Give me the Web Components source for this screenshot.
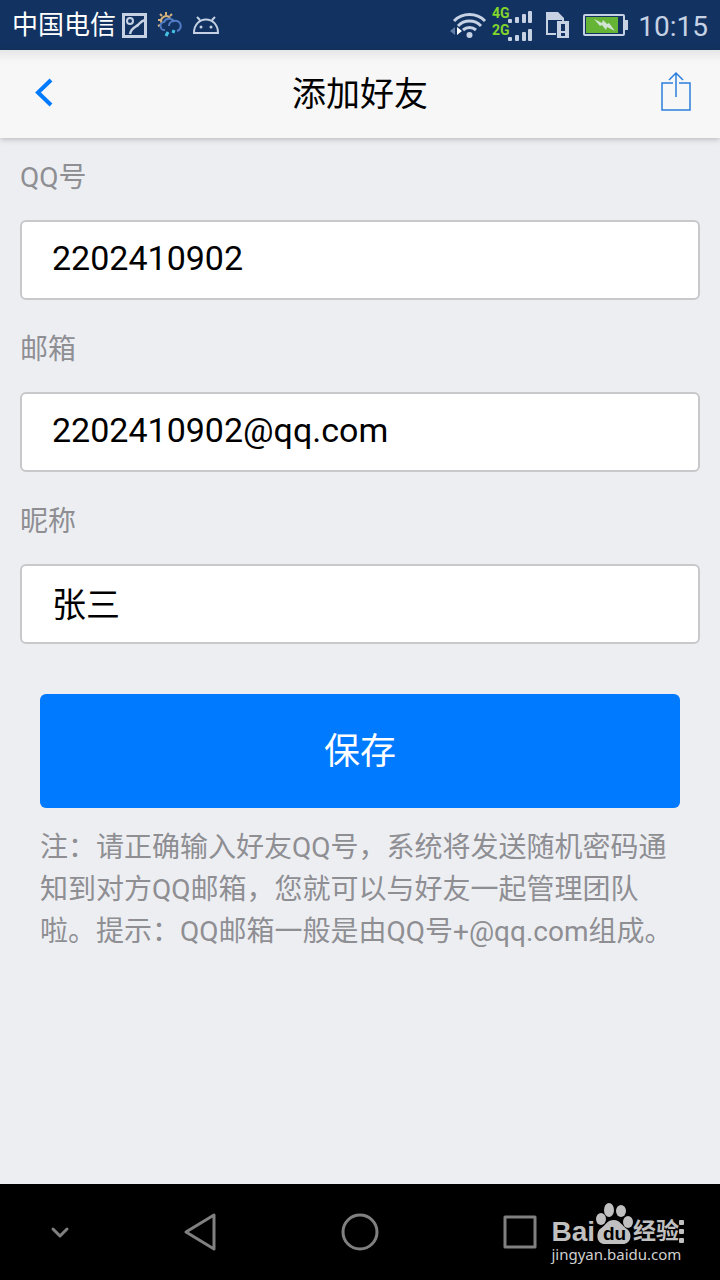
<!DOCTYPE html>
<html lang="zh-CN">
<head>
<meta charset="utf-8">
<meta name="viewport" content="width=device-width, initial-scale=1">
<title>添加好友</title>
<style>
    body {
        margin: 0;
        font-family: Roboto, "Noto Sans CJK SC", sans-serif;
    }
</style>
</head>
<body>
<friend-app></friend-app>

<script>
class StatusBar extends HTMLElement {
    constructor() {
        super();
        this.attachShadow({ mode: 'open' });
    }

    connectedCallback() {
        this.shadowRoot.innerHTML = `
            <style>
                :host {
                    display: flex;
                    align-items: center;
                    justify-content: space-between;
                    height: 50px;
                    padding: 0 12px;
                    background: #123361;
                    color: #c6d1e4;
                }
                .group {
                    display: flex;
                    align-items: center;
                }
                .carrier {
                    color: #fff;
                    font-size: 26px;
                    line-height: 50px;
                    margin-right: 6px;
                }
                .notices { gap: 10px; }
                .system { gap: 10px; }
                .time {
                    font-size: 28px;
                    line-height: 48px;
                    padding-top: 4px;
                }
                svg { display: block; }
                svg text { font: bold 14px Roboto, sans-serif; }
            </style>
            <div class="group">
                <span class="carrier">${this.getAttribute('carrier')}</span>
                <div class="group notices">
                    <svg width="25" height="26" viewBox="0 0 25 26" fill="none" stroke="currentColor">
                        <rect x="1.5" y="2.5" width="22" height="22" stroke-width="3"/>
                        <circle cx="8" cy="9" r="3" stroke-width="2"/>
                        <path d="M8 22C9 16 14 15 16 13C18 11 19 9 23 8" stroke-width="2.5"/>
                    </svg>
                    <svg width="26" height="26" viewBox="0 0 26 26" fill="none">
                        <path d="M4.500 11A5 5 0 0 1 13 6" stroke="#d8b27c" stroke-width="2"/>
                        <path d="M9 0v3M3 2l2 2M1 8h3M15 2l-2 2M3 13l-2 1" stroke="#d8b27c" stroke-width="2"/>
                        <path d="M8 18a4 4 0 0 1-1-8a6 6 0 0 1 10-1a5 5 0 0 1 3 10M12 14a5 5 0 0 1 5-5" stroke="#527cc4" stroke-width="2"/>
                        <path d="M11 20l-2 4M17 18l-1 3" stroke="#45c2e4" stroke-width="3"/>
                    </svg>
                    <svg width="26" height="20" viewBox="0 0 26 20" fill="none" stroke="currentColor" stroke-width="2">
                        <path d="M1 18C1 0 25 0 25 18zM4 2l3 3M22 2l-3 3"/>
                        <circle cx="8" cy="12" r="1.500" fill="currentColor" stroke="none"/>
                        <circle cx="18" cy="12" r="1.500" fill="currentColor" stroke="none"/>
                    </svg>
                </div>
            </div>
            <div class="group system">
                <div class="group">
                    <svg width="38" height="28" viewBox="0 0 38 28" fill="none" stroke="currentColor" stroke-width="3">
                        <path d="M5 10a22 22 0 0 1 31 0M9 15a16 16 0 0 1 23 0M14 19a10 10 0 0 1 13 0"/>
                        <circle cx="20.500" cy="24" r="3" fill="currentColor" stroke="none"/>
                        <path d="M6 16v8l-5-4z" fill="#647ea7" stroke="none"/>
                        <path d="M8 16v8l5-4z" fill="#fff" stroke="none"/>
                    </svg>
                    <svg width="47" height="42" viewBox="0 0 47 42">
                        <g fill="#82d52c">
                            <text x="5" y="14">4G</text>
                            <text x="5" y="31">2G</text>
                        </g>
                        <g fill="currentColor">
                            <rect x="21" y="15" width="4" height="4" rx="1"/>
                            <rect x="28" y="13" width="4" height="6" rx="1"/>
                            <rect x="35" y="10" width="4" height="9" rx="1"/>
                            <rect x="41" y="7" width="4" height="12" rx="1"/>
                            <rect x="21" y="33" width="4" height="4" rx="1"/>
                            <rect x="28" y="31" width="4" height="6" rx="1"/>
                            <rect x="35" y="28" width="4" height="9" rx="1"/>
                            <rect x="41" y="25" width="4" height="12" rx="1"/>
                        </g>
                    </svg>
                </div>
                <svg width="28" height="28" viewBox="0 0 28 28">
                    <path d="M2 1h12l6 6v6h-2V9H4v13h8v2H2z" fill="currentColor"/>
                    <path d="M13 10h12v17H13z" fill="currentColor"/>
                    <path d="M17 13h4v7h-4zM17 22h4v3h-4z" fill="#123361"/>
                </svg>
                <svg width="46" height="24" viewBox="0 0 46 24">
                    <rect x="2" y="2" width="40" height="20" rx="1" fill="none" stroke="currentColor" stroke-width="2"/>
                    <rect x="4" y="4" width="32" height="16" fill="#66b436"/>
                    <path d="M43 7h3v10h-3z" fill="currentColor"/>
                    <path d="M12 6l8 4 1-3 4 4 2-1 6 8-8-4-1 3-4-5-2 1z" fill="#d3e4d5"/>
                </svg>
                <span class="time">${this.getAttribute('time')}</span>
            </div>
        `;
    }
}

class TitleBar extends HTMLElement {
    constructor() {
        super();
        this.attachShadow({ mode: 'open' });
    }

    connectedCallback() {
        this.shadowRoot.innerHTML = `
            <style>
                :host {
                    display: flex;
                    align-items: center;
                    height: 88px;
                    background: linear-gradient(#e6e6e6, #f7f7f7 12px);
                    box-shadow: 0 1px 6px rgba(0, 0, 0, 0.25);
                }
                h1 {
                    flex: 1;
                    margin: 0;
                    text-align: center;
                    font-size: 34px;
                    line-height: 88px;
                    font-weight: 400;
                    color: #000;
                }
                button {
                    display: flex;
                    align-items: center;
                    justify-content: center;
                    width: 88px;
                    height: 88px;
                    padding: 0 0 4px;
                    border: none;
                    background: none;
                    color: #007aff;
                    cursor: pointer;
                }
            </style>
            <button class="back" type="button" aria-label="返回">
                <svg width="20" height="32" viewBox="0 0 20 32" fill="none" stroke="currentColor" stroke-width="4">
                    <path d="M17 4L4 16.500L17 29"/>
                </svg>
            </button>
            <h1><slot></slot></h1>
            <button class="share" type="button" aria-label="分享">
                <svg width="32" height="42" viewBox="0 0 32 42" fill="none" stroke="#2b7fdc" stroke-width="1.500">
                    <path d="M13 12H2V39H30V12H19M16 2V26M9 9L16 2L23 9"/>
                </svg>
            </button>
        `;
    }
}

class FormField extends HTMLElement {
    constructor() {
        super();
        this.attachShadow({ mode: 'open' });
    }

    connectedCallback() {
        const type = this.getAttribute('type') || 'text';
        this.shadowRoot.innerHTML = `
            <style>
                :host {
                    display: flex;
                    flex-direction: column;
                    gap: 21px;
                }
                label {
                    font-size: 28px;
                    line-height: 42px;
                    color: #8e8e93;
                }
                input {
                    box-sizing: border-box;
                    width: 100%;
                    height: 80px;
                    padding: 0 30px 4px;
                    border: 2px solid #c8c8cb;
                    border-radius: 6px;
                    background: #fff;
                    color: #000;
                    font-family: inherit;
                    font-size: 34px;
                }
                input:focus {
                    outline: none;
                    border-color: #007aff;
                }
            </style>
            <label for="field">${this.getAttribute('label')}</label>
            <input id="field" type="${type}" value="${this.getAttribute('value') || ''}">
        `;
    }
}

class SaveButton extends HTMLElement {
    constructor() {
        super();
        this.attachShadow({ mode: 'open' });
    }

    connectedCallback() {
        this.shadowRoot.innerHTML = `
            <style>
                :host { display: block; }
                button {
                    width: 100%;
                    height: 114px;
                    padding: 0 0 6px;
                    border: none;
                    border-radius: 6px;
                    background: #007aff;
                    color: #fff;
                    font-family: inherit;
                    font-size: 36px;
                    cursor: pointer;
                }
                button:active { background: #0062cc; }
            </style>
            <button type="button"><slot></slot></button>
        `;
    }
}

class NavBar extends HTMLElement {
    constructor() {
        super();
        this.attachShadow({ mode: 'open' });
    }

    connectedCallback() {
        this.shadowRoot.innerHTML = `
            <style>
                :host {
                    display: flex;
                    height: 96px;
                    background: #000;
                }
                button {
                    flex: 4;
                    display: flex;
                    align-items: center;
                    justify-content: center;
                    padding: 0;
                    border: none;
                    background: none;
                    color: #808080;
                    cursor: pointer;
                }
                button.hide, .spacer { flex: 3; }
                svg {
                    fill: none;
                    stroke: currentColor;
                    stroke-width: 3;
                    stroke-linejoin: round;
                    stroke-linecap: round;
                }
            </style>
            <button class="hide" type="button" aria-label="隐藏">
                <svg width="20" height="14" viewBox="0 0 20 14"><path d="M3 4l7 7 7-7"/></svg>
            </button>
            <button type="button" aria-label="返回">
                <svg width="40" height="40" viewBox="0 0 40 40"><path d="M34 3V37L6 20z"/></svg>
            </button>
            <button type="button" aria-label="主页">
                <svg width="40" height="40" viewBox="0 0 40 40"><circle cx="20" cy="20" r="17"/></svg>
            </button>
            <button type="button" aria-label="最近">
                <svg width="40" height="40" viewBox="0 0 40 40"><rect x="5" y="5" width="30" height="30"/></svg>
            </button>
            <div class="spacer"></div>
        `;
    }
}

class SiteMark extends HTMLElement {
    constructor() {
        super();
        this.attachShadow({ mode: 'open' });
    }

    connectedCallback() {
        this.shadowRoot.innerHTML = `
            <style>
                :host {
                    display: block;
                    color: #c0c0c0;
                    pointer-events: none;
                }
                .logo {
                    display: flex;
                    align-items: flex-end;
                    height: 42px;
                }
                .logo span {
                    line-height: 24px;
                    font-weight: 700;
                }
                .bai { font-family: "Liberation Sans", sans-serif; font-size: 28px; }
                .jy { font-size: 23px; }
                .url {
                    font-family: "Noto Sans", sans-serif;
                    font-size: 15px;
                    line-height: 20px;
                    color: #d0d0d0;
                }
                svg { display: block; }
                svg text { font: bold 19px "Liberation Sans", sans-serif; }
            </style>
            <div class="logo">
                <span class="bai">Bai</span>
                <svg width="38" height="42" viewBox="0 0 38 42" fill="currentColor">
                    <ellipse cx="6" cy="17" rx="5" ry="6"/>
                    <ellipse cx="14" cy="8" rx="5" ry="7"/>
                    <ellipse cx="26" cy="9" rx="5" ry="6"/>
                    <ellipse cx="33" cy="20" rx="5" ry="6"/>
                    <path d="M19 18C25 18 27 24 32 27C38 32 36 42 28 42H10C1 42 1 31 5 27C11 23 12 18 19 18z"/>
                    <text x="8" y="38" fill="#000">du</text>
                </svg>
                <span class="jy">经验</span>
                <svg width="5" height="24" viewBox="0 0 5 24" fill="currentColor">
                    <rect y="0" width="5" height="5" rx="1"/>
                    <rect y="9" width="5" height="5" rx="1"/>
                    <rect y="18" width="5" height="5" rx="1"/>
                </svg>
            </div>
            <div class="url">jingyan.baidu.com</div>
        `;
    }
}

class FriendApp extends HTMLElement {
    constructor() {
        super();
        this.attachShadow({ mode: 'open' });
    }

    connectedCallback() {
        this.shadowRoot.innerHTML = `
            <style>
                :host {
                    display: flex;
                    flex-direction: column;
                    position: relative;
                    min-height: 100vh;
                    background: #edeef2;
                }
                main {
                    flex: 1;
                    padding: 19px 20px;
                }
                .fields {
                    display: flex;
                    flex-direction: column;
                    gap: 29px;
                }
                .actions { padding: 50px 20px 0; }
                p {
                    margin: 19px 0 0;
                    font-size: 28px;
                    line-height: 42px;
                    color: #8e8e93;
                }
                site-mark {
                    position: absolute;
                    right: 36px;
                    bottom: 16px;
                }
            </style>
            <status-bar carrier="中国电信" time="10:15"></status-bar>
            <title-bar>添加好友</title-bar>
            <main>
                <div class="fields">
                    <form-field label="QQ号" value="2202410902"></form-field>
                    <form-field label="邮箱" type="email" value="2202410902@qq.com"></form-field>
                    <form-field label="昵称" value="张三"></form-field>
                </div>
                <div class="actions">
                    <save-button>保存</save-button>
                    <p>注：请正确输入好友QQ号，系统将发送随机密码通知到对方QQ邮箱，您就可以与好友一起管理团队啦。提示：QQ邮箱一般是由QQ号+@qq.com组成。</p>
                </div>
            </main>
            <nav-bar></nav-bar>
            <site-mark></site-mark>
        `;
    }
}

customElements.define('status-bar', StatusBar);
customElements.define('title-bar', TitleBar);
customElements.define('form-field', FormField);
customElements.define('save-button', SaveButton);
customElements.define('nav-bar', NavBar);
customElements.define('site-mark', SiteMark);
customElements.define('friend-app', FriendApp);
</script>
</body>
</html>
